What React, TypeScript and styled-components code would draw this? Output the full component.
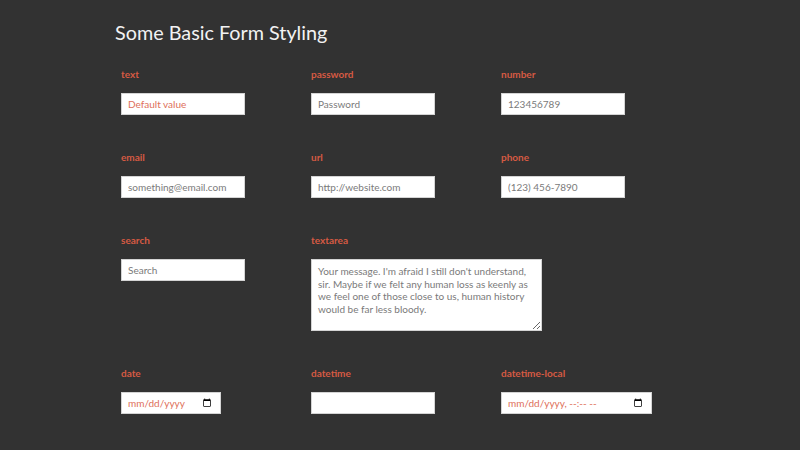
import React from "react";
import styled, { createGlobalStyle } from "styled-components";

const Global = createGlobalStyle`
  html, body { margin: 0; padding: 0; background: #323232; }
  body { font-family: Lato, "Open Sans", sans-serif; }
`;

const Page = styled.div`
  padding: 20px 0 0 115px;
`;

const Title = styled.h1`
  margin: 0;
  font-size: 19.8px;
  line-height: 25px;
  font-weight: 400;
  color: #f2f2f2;
`;

const Grid = styled.div`
  display: grid;
  grid-template-columns: repeat(3, 190px);
  row-gap: 36px;
  margin-top: 23px;
  padding-left: 6px;
`;

const Field = styled.div<{ $span?: number }>`
  display: flex;
  flex-direction: column;
  align-items: flex-start;
  gap: 13px;
  grid-column: span ${(p) => p.$span ?? 1};
`;

const Label = styled.label`
  font-size: 10px;
  line-height: 12px;
  font-weight: 700;
  color: #d65a43;
`;

const inputBase = `
  box-sizing: border-box;
  font-family: Lato, "Open Sans", sans-serif;
  font-size: 10px;
  color: #de6f5a;
  background: #fff;
  border: 1px solid #d4d4d4;
  border-radius: 0;
  outline: none;
  margin: 0;
  &::placeholder { color: #7a7a7a; }
`;

const Input = styled.input<{ $w?: number }>`
  ${inputBase}
  width: ${(p) => p.$w ?? 124}px;
  height: 22px;
  padding: 0 6px;
  &::-webkit-datetime-edit-text { padding: 0; }
  &::-webkit-datetime-edit-fields-wrapper { padding: 0; }
  &::-webkit-datetime-edit-month-field,
  &::-webkit-datetime-edit-day-field,
  &::-webkit-datetime-edit-year-field,
  &::-webkit-datetime-edit-hour-field,
  &::-webkit-datetime-edit-minute-field,
  &::-webkit-datetime-edit-ampm-field { padding: 0; }
  &::-webkit-calendar-picker-indicator { margin-left: 4px; }
`;

const TextArea = styled.textarea`
  ${inputBase}
  width: 231px;
  height: 72px;
  padding: 5px 6px;
  line-height: 12.7px;
  resize: both;
`;

export default function App() {
  return (
    <>
      <Global />
      <Page>
        <Title>Some Basic Form Styling</Title>
        <Grid>
          <Field>
            <Label>text</Label>
            <Input type="text" defaultValue="Default value" />
          </Field>
          <Field>
            <Label>password</Label>
            <Input type="password" placeholder="Password" />
          </Field>
          <Field>
            <Label>number</Label>
            <Input type="number" placeholder="123456789" />
          </Field>
          <Field>
            <Label>email</Label>
            <Input type="email" placeholder="something@email.com" />
          </Field>
          <Field>
            <Label>url</Label>
            <Input type="url" placeholder="http://website.com" />
          </Field>
          <Field>
            <Label>phone</Label>
            <Input type="tel" placeholder="(123) 456-7890" />
          </Field>
          <Field>
            <Label>search</Label>
            <Input type="search" placeholder="Search" />
          </Field>
          <Field $span={2}>
            <Label>textarea</Label>
            <TextArea placeholder="Your message. I'm afraid I still don't understand, sir. Maybe if we felt any human loss as keenly as we feel one of those close to us, human history would be far less bloody." />
          </Field>
          <Field>
            <Label>date</Label>
            <Input type="date" $w={100} />
          </Field>
          <Field>
            <Label>datetime</Label>
            <Input type="datetime" />
          </Field>
          <Field>
            <Label>datetime-local</Label>
            <Input type="datetime-local" $w={151} />
          </Field>
        </Grid>
      </Page>
    </>
  );
}
